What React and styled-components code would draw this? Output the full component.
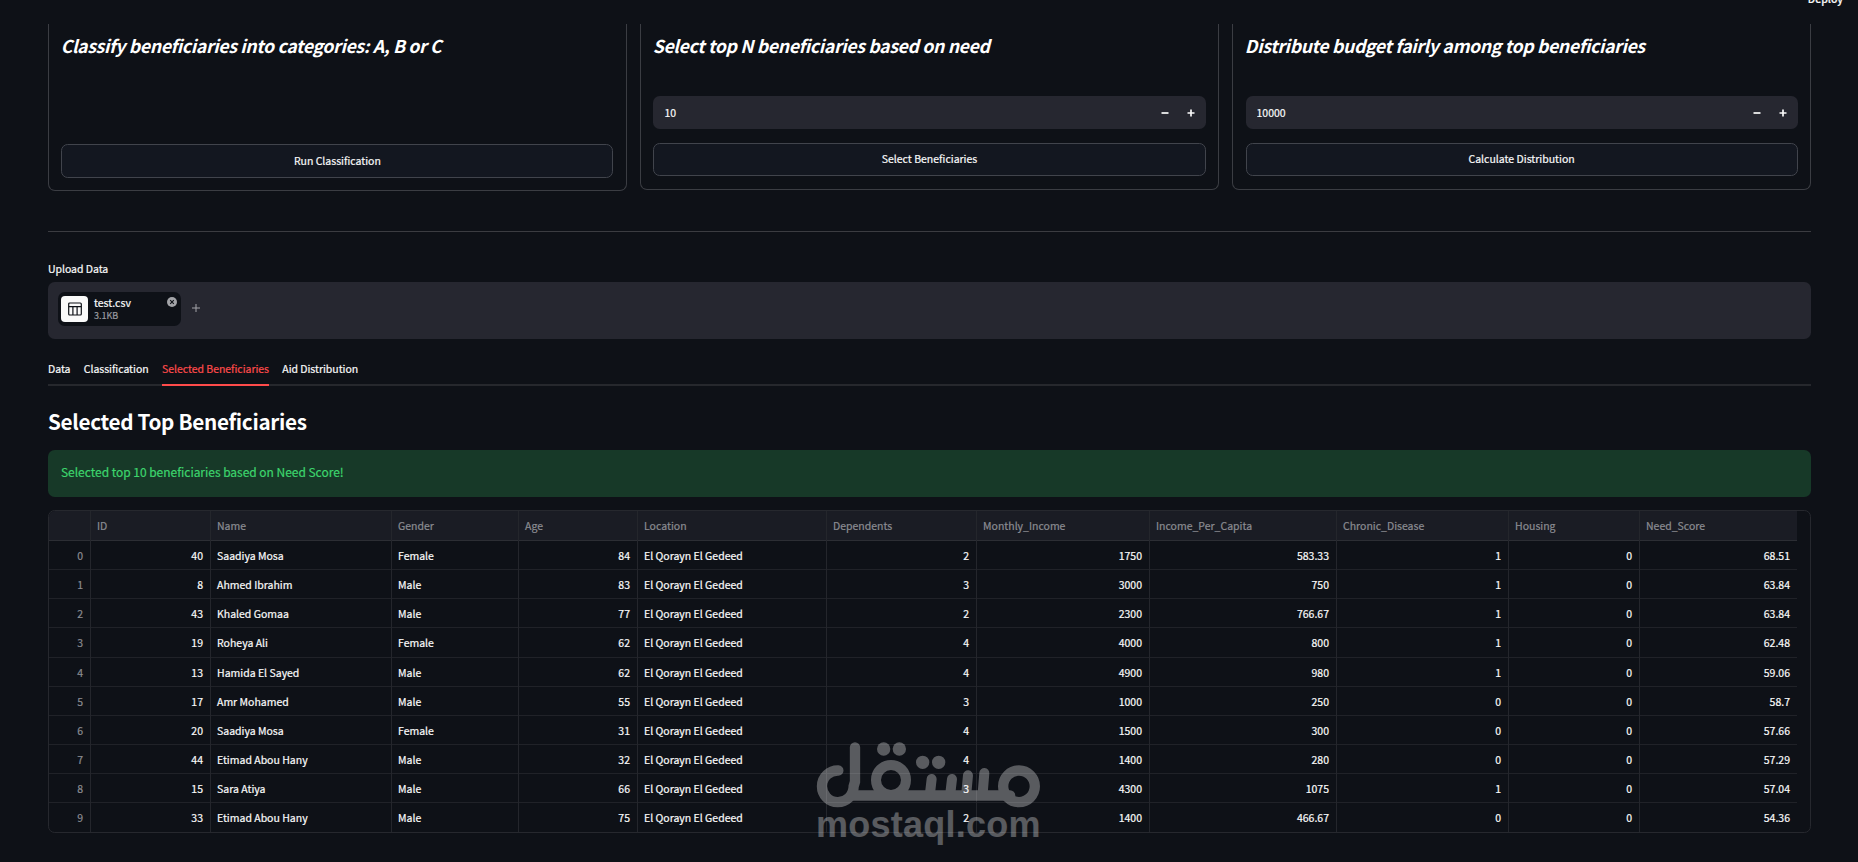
import styled, { createGlobalStyle } from "styled-components";
import { useState } from "react";

const GlobalStyle = createGlobalStyle`
  * {
    box-sizing: border-box;
    margin: 0;
    padding: 0;
  }
  body {
    background: #0e1117;
    color: #fafafa;
    font-family: "Noto Sans CJK SC", "Noto Sans", sans-serif;
    font-size: 10.5px;
    -webkit-text-stroke: 0.2px;
    overflow: hidden;
  }
  button, input {
    font-family: inherit;
    color: inherit;
  }
`;

const Page = styled.div`
  width: 100%;
  height: 862px;
  overflow: hidden;
`;

const Header = styled.header`
  display: flex;
  justify-content: flex-end;
  height: 24px;
  padding-right: 15px;
  overflow: hidden;

  span {
    height: 16px;
    margin-top: -9px;
    line-height: 15px;
    font-weight: 500;
  }
`;

const Main = styled.main`
  padding: 0 47px 0 48px;
`;

const Cards = styled.section`
  display: grid;
  grid-template-columns: repeat(3, 1fr);
  gap: 13.33px;
  align-items: start;
`;

const Card = styled.div`
  display: flex;
  flex-direction: column;
  height: ${({ $tall }) => ($tall ? "167px" : "166px")};
  padding: 0 12.33px ${({ $tall }) => ($tall ? "12px" : "13px")};
  border: 1px solid #3b3d43;
  border-top: none;
  border-radius: 0 0 7px 7px;

  h3 {
    height: 26px;
    margin-top: 8px;
    margin-left: -0.7px;
    margin-bottom: auto;
    line-height: 26px;
    font-size: 17.7px;
    font-weight: 600;
    font-style: italic;
    letter-spacing: -0.35px;
    color: #fff;
    white-space: nowrap;
    -webkit-text-stroke: 0;
  }
`;

const NumberField = styled.div`
  display: flex;
  align-items: center;
  height: 33px;
  margin-bottom: 14px;
  padding: 0 1px 0 11px;
  border-radius: 6.67px;
  background: #262730;

  input {
    flex: 1;
    min-width: 0;
    border: none;
    outline: none;
    background: transparent;
    font-size: 10.5px;
  }
  button {
    display: flex;
    justify-content: center;
    align-items: center;
    width: 26.67px;
    height: 33px;
    border: none;
    background: transparent;
  }
`;

const ActionButton = styled.button`
  height: ${({ $tall }) => ($tall ? "34px" : "33px")};
  flex: none;
  padding-bottom: ${({ $tall }) => ($tall ? "0" : "2px")};
  border: 1px solid #41444c;
  border-radius: 6.67px;
  background: #131720;
  font-size: 10.5px;
  line-height: 24px;
  cursor: pointer;
`;

const Divider = styled.hr`
  height: 1px;
  margin: 40px 0 30px;
  border: none;
  background: #3b3c41;
`;

const UploadLabel = styled.label`
  display: block;
  height: 20px;
  line-height: 14px;
  letter-spacing: -0.04px;
`;

const Dropzone = styled.div`
  display: flex;
  align-items: flex-start;
  gap: 11px;
  height: 57px;
  padding: 10px;
  border-radius: 6.67px;
  background: #262730;
`;

const FileChip = styled.div`
  display: flex;
  width: 123px;
  height: 34px;
  padding: 4px 4px 4px 3px;
  border-radius: 6.67px;
  background: #0e1117;
`;

const FileIcon = styled.div`
  display: flex;
  justify-content: center;
  align-items: center;
  width: 27px;
  height: 26px;
  border-radius: 4px;
  background: #fafafa;
`;

const FileInfo = styled.div`
  flex: 1;
  padding-left: 6px;

  strong {
    display: block;
    line-height: 14px;
    font-weight: 400;
  }
  small {
    display: block;
    line-height: 11px;
    font-size: 9px;
    color: #9b9ca1;
  }
`;

const CloseIcon = styled.svg`
  width: 10px;
  height: 10px;
  margin-top: 1px;
`;

const AddIcon = styled.svg`
  width: 8px;
  height: 8px;
  margin-top: 12px;
`;

const Tabs = styled.nav`
  display: flex;
  gap: 13.33px;
  height: 33px;
  margin-top: 14px;
  border-bottom: 2px solid #26282d;
`;

const Tab = styled.button`
  height: 33px;
  border: none;
  border-bottom: 2px solid ${({ $active }) => ($active ? "#ff4b4b" : "transparent")};
  background: transparent;
  color: ${({ $active }) => ($active ? "#ff4b4b" : "#fafafa")};
  font-size: 10.5px;
  line-height: 30px;
  letter-spacing: -0.03px;
  cursor: pointer;
`;

const Heading = styled.h2`
  height: 64px;
  line-height: 70px;
  font-size: 20.7px;
  font-weight: 600;
  letter-spacing: -0.32px;
  color: #fff;
  -webkit-text-stroke: 0;
`;

const Success = styled.div`
  height: 47px;
  padding-left: 13px;
  border-radius: 6.67px;
  background: #173928;
  color: #3dd56d;
  font-size: 12px;
  line-height: 44px;
  letter-spacing: -0.03px;
`;

const TableFrame = styled.div`
  height: 323px;
  margin-top: 13px;
  border: 1px solid #26282e;
  border-radius: 6.67px;
  overflow: hidden;
`;

const Row = styled.div`
  display: grid;
  grid-template-columns: 42px 120px 181px 127px 119px 189px 150px 173px 187px 172px 131px 157px;
  width: 1748px;
  height: ${({ $head }) => ($head ? "30px" : "29.17px")};
  line-height: 29.6px;
  border-bottom: 1px solid ${({ $head }) => ($head ? "#2c2e34" : "#202228")};
  background: ${({ $head }) => ($head ? "#1a1c24" : "transparent")};
`;

const Cell = styled.div`
  height: 100%;
  padding: 0 7px 0 6px;
  border-right: 1px solid #24262c;
  text-align: ${({ $right }) => ($right ? "right" : "left")};
  color: ${({ $muted }) => ($muted ? "#8b8c92" : "#fafafa")};
  white-space: nowrap;

  &:last-child {
    border-right: none;
  }
`;

const Watermark = styled.div`
  position: absolute;
  left: 815px;
  top: 740px;
  width: 227px;
  height: 110px;
  opacity: 0.31;
  color: #fff;
  pointer-events: none;

  svg {
    display: block;
    width: 226.67px;
    height: 70px;
  }
  p {
    margin-top: -7px;
    padding-left: 1px;
    font-family: "Liberation Sans", sans-serif;
    font-size: 36px;
    font-weight: 700;
    line-height: 44px;
    letter-spacing: 0.25px;
    white-space: nowrap;
    -webkit-text-stroke: 0;
  }
`;

const columns = [
  { name: "", right: true, muted: true },
  { name: "ID", right: true },
  { name: "Name" },
  { name: "Gender" },
  { name: "Age", right: true },
  { name: "Location" },
  { name: "Dependents", right: true },
  { name: "Monthly_Income", right: true },
  { name: "Income_Per_Capita", right: true },
  { name: "Chronic_Disease", right: true },
  { name: "Housing", right: true },
  { name: "Need_Score", right: true },
];

const place = "El Qorayn El Gedeed";
const rows = [
  [0, 40, "Saadiya Mosa", "Female", 84, place, 2, 1750, 583.33, 1, 0, 68.51],
  [1, 8, "Ahmed Ibrahim", "Male", 83, place, 3, 3000, 750, 1, 0, 63.84],
  [2, 43, "Khaled Gomaa", "Male", 77, place, 2, 2300, 766.67, 1, 0, 63.84],
  [3, 19, "Roheya Ali", "Female", 62, place, 4, 4000, 800, 1, 0, 62.48],
  [4, 13, "Hamida El Sayed", "Male", 62, place, 4, 4900, 980, 1, 0, 59.06],
  [5, 17, "Amr Mohamed", "Male", 55, place, 3, 1000, 250, 0, 0, 58.7],
  [6, 20, "Saadiya Mosa", "Female", 31, place, 4, 1500, 300, 0, 0, 57.66],
  [7, 44, "Etimad Abou Hany", "Male", 32, place, 4, 1400, 280, 0, 0, 57.29],
  [8, 15, "Sara Atiya", "Male", 66, place, 3, 4300, 1075, 1, 0, 57.04],
  [9, 33, "Etimad Abou Hany", "Male", 75, place, 2, 1400, 466.67, 0, 0, 54.36],
];

const tabs = ["Data", "Classification", "Selected Beneficiaries", "Aid Distribution"];

const NumberInput = ({ initial, step }) => {
  const [value, setValue] = useState(initial);
  return (
    <NumberField>
      <input value={value} onChange={(e) => setValue(Number(e.target.value) || 0)} />
      <button aria-label="decrease" onClick={() => setValue(value - step)}>
        <svg width="8" height="8" viewBox="0 0 8 8">
          <path d="M0.5 4H7.5" stroke="#fafafa" strokeWidth="1.7" />
        </svg>
      </button>
      <button aria-label="increase" onClick={() => setValue(value + step)}>
        <svg width="8" height="8" viewBox="0 0 8 8">
          <path d="M0.5 4H7.5M4 0.5V7.5" stroke="#fafafa" strokeWidth="1.7" />
        </svg>
      </button>
    </NumberField>
  );
};

const MostaqlLogo = () => (
  <svg viewBox="105 90 680 210" fill="none" stroke="currentColor" strokeLinecap="round">
    <circle cx="717" cy="229" r="47.5" strokeWidth="31" />
    <circle cx="333" cy="210" r="45" strokeWidth="30" />
    <path d="M215 256.5H690" strokeWidth="32" />
    <path d="M613 189L608 250M564 196L559 250M516 207L511 250M455 207L450 250" strokeWidth="30" />
    <path d="M175 181.5A47.5 47.5 0 1 0 221 229L225 215V112" strokeWidth="31" />
    <g fill="currentColor" stroke="none">
      <circle cx="428" cy="157" r="20" />
      <circle cx="476" cy="157" r="20" />
      <circle cx="311" cy="117" r="20" />
      <circle cx="358" cy="117" r="20" />
    </g>
  </svg>
);

const App = () => {
  const [active, setActive] = useState("Selected Beneficiaries");

  return (
    <Page>
      <GlobalStyle />
      <Header>
        <span>Deploy</span>
      </Header>
      <Main>
        <Cards>
          <Card $tall>
            <h3>Classify beneficiaries into categories: A, B or C</h3>
            <ActionButton $tall>Run Classification</ActionButton>
          </Card>
          <Card>
            <h3>Select top N beneficiaries based on need</h3>
            <NumberInput initial={10} step={1} />
            <ActionButton>Select Beneficiaries</ActionButton>
          </Card>
          <Card>
            <h3>Distribute budget fairly among top beneficiaries</h3>
            <NumberInput initial={10000} step={100} />
            <ActionButton>Calculate Distribution</ActionButton>
          </Card>
        </Cards>
        <Divider />
        <UploadLabel>Upload Data</UploadLabel>
        <Dropzone>
          <FileChip>
            <FileIcon>
              <svg width="14" height="14" viewBox="0 0 14 14" fill="none" stroke="#0e1117" strokeWidth="1.2">
                <rect x="0.7" y="1" width="12.6" height="12" rx="1" />
                <path d="M0.7 4.6H13.3M4.9 4.6V13M9.1 4.6V13" />
              </svg>
            </FileIcon>
            <FileInfo>
              <strong>test.csv</strong>
              <small>3.1KB</small>
            </FileInfo>
            <CloseIcon viewBox="0 0 10 10">
              <circle cx="5" cy="5" r="5" fill="#a3a4a8" />
              <path d="M3.2 3.2L6.8 6.8M6.8 3.2L3.2 6.8" stroke="#0e1117" strokeWidth="1.1" />
            </CloseIcon>
          </FileChip>
          <AddIcon viewBox="0 0 8 8">
            <path d="M0 4H8M4 0V8" stroke="#a3a4a8" strokeWidth="1" />
          </AddIcon>
        </Dropzone>
        <Tabs>
          {tabs.map((tab) => (
            <Tab key={tab} $active={tab === active} onClick={() => setActive(tab)}>
              {tab}
            </Tab>
          ))}
        </Tabs>
        <Heading>Selected Top Beneficiaries</Heading>
        <Success>Selected top 10 beneficiaries based on Need Score!</Success>
        <TableFrame>
          <Row $head>
            {columns.map((col) => (
              <Cell key={col.name} $muted>
                {col.name}
              </Cell>
            ))}
          </Row>
          {rows.map((row) => (
            <Row key={row[0]}>
              {row.map((value, i) => (
                <Cell key={i} $right={columns[i].right} $muted={columns[i].muted}>
                  {value}
                </Cell>
              ))}
            </Row>
          ))}
        </TableFrame>
      </Main>
      <Watermark>
        <MostaqlLogo />
        <p>mostaql.com</p>
      </Watermark>
    </Page>
  );
};

export default App;
